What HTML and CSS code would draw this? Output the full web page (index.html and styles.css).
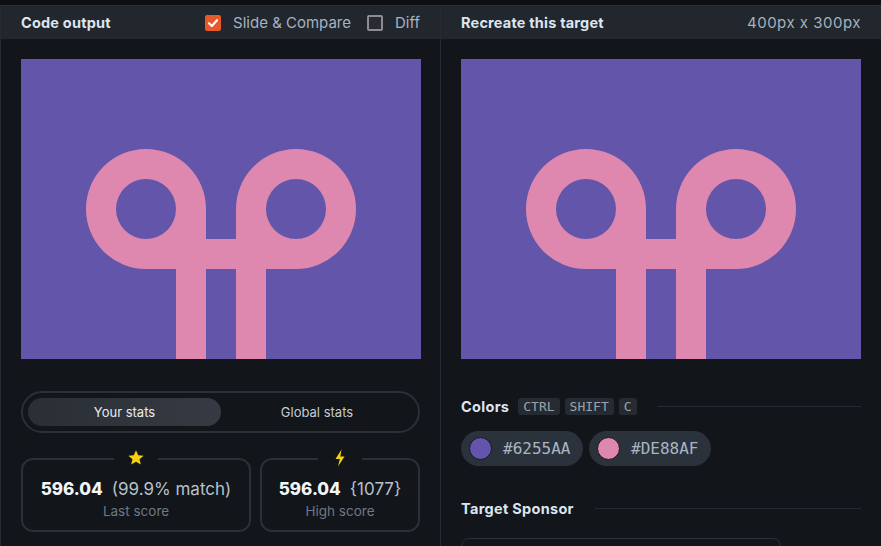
FILE: index.html
```html
<!DOCTYPE html>
<html>
<head>
<meta charset="utf-8">
<link rel="stylesheet" href="styles.css">
</head>
<body>
<div class="app">
  <section class="panel panel-left">
    <header class="panel-head">
      <h2 class="head-title">Code output</h2>
      <div class="head-opts">
        <label class="opt"><span class="cb cb-on"><svg viewBox="0 0 16 16" width="16" height="16"><path d="M4 8.3 L6.9 11 L12 5.2" fill="none" stroke="#fff" stroke-width="2.2" stroke-linecap="round" stroke-linejoin="round"/></svg></span>Slide &amp; Compare</label>
        <label class="opt"><span class="cb cb-off"></span>Diff</label>
      </div>
    </header>
    <div class="panel-body">
      <div class="art">
        <svg viewBox="0 0 400 300" width="400" height="300">
          <rect width="400" height="300" fill="#6255AA"/>
          <g fill="#DE88AF" fill-rule="evenodd">
            <path d="M65 150 A60 60 0 0 1 185 150 V210 H125 A60 60 0 0 1 65 150 Z M95 150 A30 30 0 1 0 155 150 A30 30 0 1 0 95 150 Z"/>
            <path d="M215 150 A60 60 0 0 1 335 150 A60 60 0 0 1 275 210 H215 Z M245 150 A30 30 0 1 0 305 150 A30 30 0 1 0 245 150 Z"/>
            <rect x="185" y="180" width="30" height="30"/>
            <rect x="155" y="210" width="30" height="90"/>
            <rect x="215" y="210" width="30" height="90"/>
          </g>
        </svg>
      </div>
      <div class="toggle">
        <button class="tab tab-active">Your stats</button>
        <button class="tab">Global stats</button>
      </div>
      <div class="cards">
        <div class="card card-wide">
          <span class="card-icon"><svg viewBox="0 0 20 20" width="18" height="18"><path d="M10 1.5 L12.5 7 L18.5 7.4 L13.9 11.3 L15.4 17.3 L10 14.1 L4.6 17.3 L6.1 11.3 L1.5 7.4 L7.5 7 Z" fill="#F5D10D"/></svg></span>
          <div class="score"><b>596.04</b><span class="score-sub">(99.9% match)</span></div>
          <div class="score-label">Last score</div>
        </div>
        <div class="card card-narrow">
          <span class="card-icon"><svg viewBox="0 0 12 18" width="12" height="18"><path d="M7.5 0.5 L1.5 10 H5.8 L4 17.5 L10.5 7.5 H6.3 Z" fill="#F5D10D"/></svg></span>
          <div class="score"><b>596.04</b><span class="score-sub">{1077}</span></div>
          <div class="score-label">High score</div>
        </div>
      </div>
    </div>
  </section>
  <section class="panel panel-right">
    <header class="panel-head">
      <h2 class="head-title">Recreate this target</h2>
      <span class="head-dim">400px x 300px</span>
    </header>
    <div class="panel-body">
      <div class="art">
        <svg viewBox="0 0 400 300" width="400" height="300">
          <rect width="400" height="300" fill="#6255AA"/>
          <g fill="#DE88AF" fill-rule="evenodd">
            <path d="M65 150 A60 60 0 0 1 185 150 V210 H125 A60 60 0 0 1 65 150 Z M95 150 A30 30 0 1 0 155 150 A30 30 0 1 0 95 150 Z"/>
            <path d="M215 150 A60 60 0 0 1 335 150 A60 60 0 0 1 275 210 H215 Z M245 150 A30 30 0 1 0 305 150 A30 30 0 1 0 245 150 Z"/>
            <rect x="185" y="180" width="30" height="30"/>
            <rect x="155" y="210" width="30" height="90"/>
            <rect x="215" y="210" width="30" height="90"/>
          </g>
        </svg>
      </div>
      <div class="section-head section-colors">
        <h3 class="section-title">Colors</h3>
        <kbd class="key">CTRL</kbd><kbd class="key">SHIFT</kbd><kbd class="key">C</kbd>
        <span class="rule"></span>
      </div>
      <div class="chips">
        <div class="chip"><span class="swatch swatch-purple"></span>#6255AA</div>
        <div class="chip"><span class="swatch swatch-pink"></span>#DE88AF</div>
      </div>
      <div class="section-head section-sponsor">
        <h3 class="section-title">Target Sponsor</h3>
        <span class="rule rule-sponsor"></span>
      </div>
      <div class="sponsor-box"></div>
    </div>
  </section>
</div>
</body>
</html>
```
FILE: styles.css
```css
* { box-sizing: border-box; }
html, body { margin: 0; padding: 0; }
body {
  background: #0d0f13;
  font-family: Inter, "Noto Sans", sans-serif;
  width: 881px;
  height: 546px;
  overflow: hidden;
}
.app {
  display: flex;
  padding-top: 5px;
  height: 546px;
}
.panel {
  background: #121519;
  display: flex;
  flex-direction: column;
  overflow: hidden;
}
.panel-left {
  width: 441px;
  border-left: 1px solid #262b33;
  border-right: 1px solid #262b33;
}
.panel-right {
  flex: 1;
}
.panel-head {
  flex: 0 0 34px;
  height: 34px;
  background: #22262d;
  border-top: 1px solid #2b3038;
  display: flex;
  align-items: center;
  justify-content: space-between;
  padding: 0 20px 0 20px;
}
.head-title {
  margin: 0;
  font-size: 14.5px;
  font-weight: 700;
  color: #dce5ef;
  letter-spacing: 0.2px;
}
.head-opts {
  display: flex;
  align-items: center;
  gap: 16px;
}
.opt {
  display: flex;
  align-items: center;
  gap: 12px;
  font-size: 15px;
  color: #a3b3c6;
}
.cb {
  width: 16px;
  height: 16px;
  border-radius: 2px;
  display: inline-flex;
}
.cb-on { background: #e8582a; }
.cb-off { background: #2a2a31; border: 2px solid #8a8d97; }
.head-dim {
  font-size: 15px;
  letter-spacing: 0.5px;
  color: #a6b1bf;
}
.panel-body {
  flex: 0 0 auto;
  padding: 20px 20px 0 20px;
  display: flex;
  flex-direction: column;
}
.panel-left .panel-body { padding: 20px 19px 0 20px; }
.art { width: 400px; height: 300px; display: flex; flex-shrink: 0; }
.art svg { display: block; }

.toggle {
  margin-top: 32px;
  height: 42px;
  border: 2px solid #2a3038;
  border-radius: 21px;
  display: flex;
  padding: 5px 5px;
  width: 399px;
  flex-shrink: 0;
}
.tab {
  flex: 1;
  border: 0;
  background: transparent;
  font-family: inherit;
  font-size: 13px;
  color: #c3ccd6;
  border-radius: 15px;
  padding: 0;
}
.tab-active {
  background: linear-gradient(90deg, #2a2f35, #363b43);
  color: #e6ebf0;
  flex: 0 0 193px;
}
.cards {
  margin-top: 25px;
  display: flex;
  gap: 9px;
  width: 399px;
  flex-shrink: 0;
}
.card {
  position: relative;
  height: 74px;
  border: 2px solid #2a3038;
  border-radius: 12px;
  display: flex;
  flex-direction: column;
  align-items: center;
  padding-top: 19px;
}
.card-wide { width: 230px; }
.card-narrow { flex: 1; }
.card-icon {
  position: absolute;
  top: -12px;
  left: 50%;
  transform: translateX(-50%);
  width: 44px;
  height: 20px;
  background: #121519;
  display: flex;
  align-items: center;
  justify-content: center;
}
.score {
  font-size: 17px;
  color: #f2f5f8;
  display: flex;
  gap: 9px;
  align-items: baseline;
}
.score b { font-weight: 800; }
.score-sub { color: #b7c1cc; font-weight: 400; }
.score-label {
  margin-top: 4px;
  font-size: 13.5px;
  color: #6d7987;
}

.section-head {
  display: flex;
  align-items: center;
  flex-shrink: 0;
}
.section-colors { margin-top: 38px; height: 18px; }
.section-title {
  margin: 0;
  font-size: 14.5px;
  font-weight: 700;
  color: #dce5ef;
  letter-spacing: 0.3px;
}
.key {
  font-family: "DejaVu Sans Mono", "Liberation Mono", monospace;
  font-size: 13px;
  color: #9aa3ad;
  background: #262b31;
  border-radius: 3px;
  height: 17px;
  line-height: 17px;
  padding: 0 5px;
  margin-left: 5px;
}
.section-title + .key { margin-left: 9px; }
.rule {
  flex: 1;
  height: 1px;
  background: #262b33;
  margin-left: 21px;
}
.chips {
  margin-top: 16px;
  display: flex;
  gap: 6px;
  flex-shrink: 0;
}
.chip {
  height: 35px;
  width: 122px;
  border-radius: 18px;
  background: #2b323b;
  display: flex;
  align-items: center;
  padding-left: 8px;
  gap: 11px;
  font-family: "DejaVu Sans Mono", "Liberation Mono", monospace;
  font-size: 16px;
  color: #a9b5c3;
}
.swatch {
  width: 23px;
  height: 23px;
  border-radius: 50%;
  border: 1.5px solid #15181c;
}
.swatch-purple { background: #6255AA; }
.swatch-pink { background: #DE88AF; }
.section-sponsor { margin-top: 33px; height: 18px; }
.sponsor-box {
  margin-top: 21px;
  width: 320px;
  height: 40px;
  border: 1px solid #2a3038;
  border-radius: 8px;
  flex-shrink: 0;
}
```
